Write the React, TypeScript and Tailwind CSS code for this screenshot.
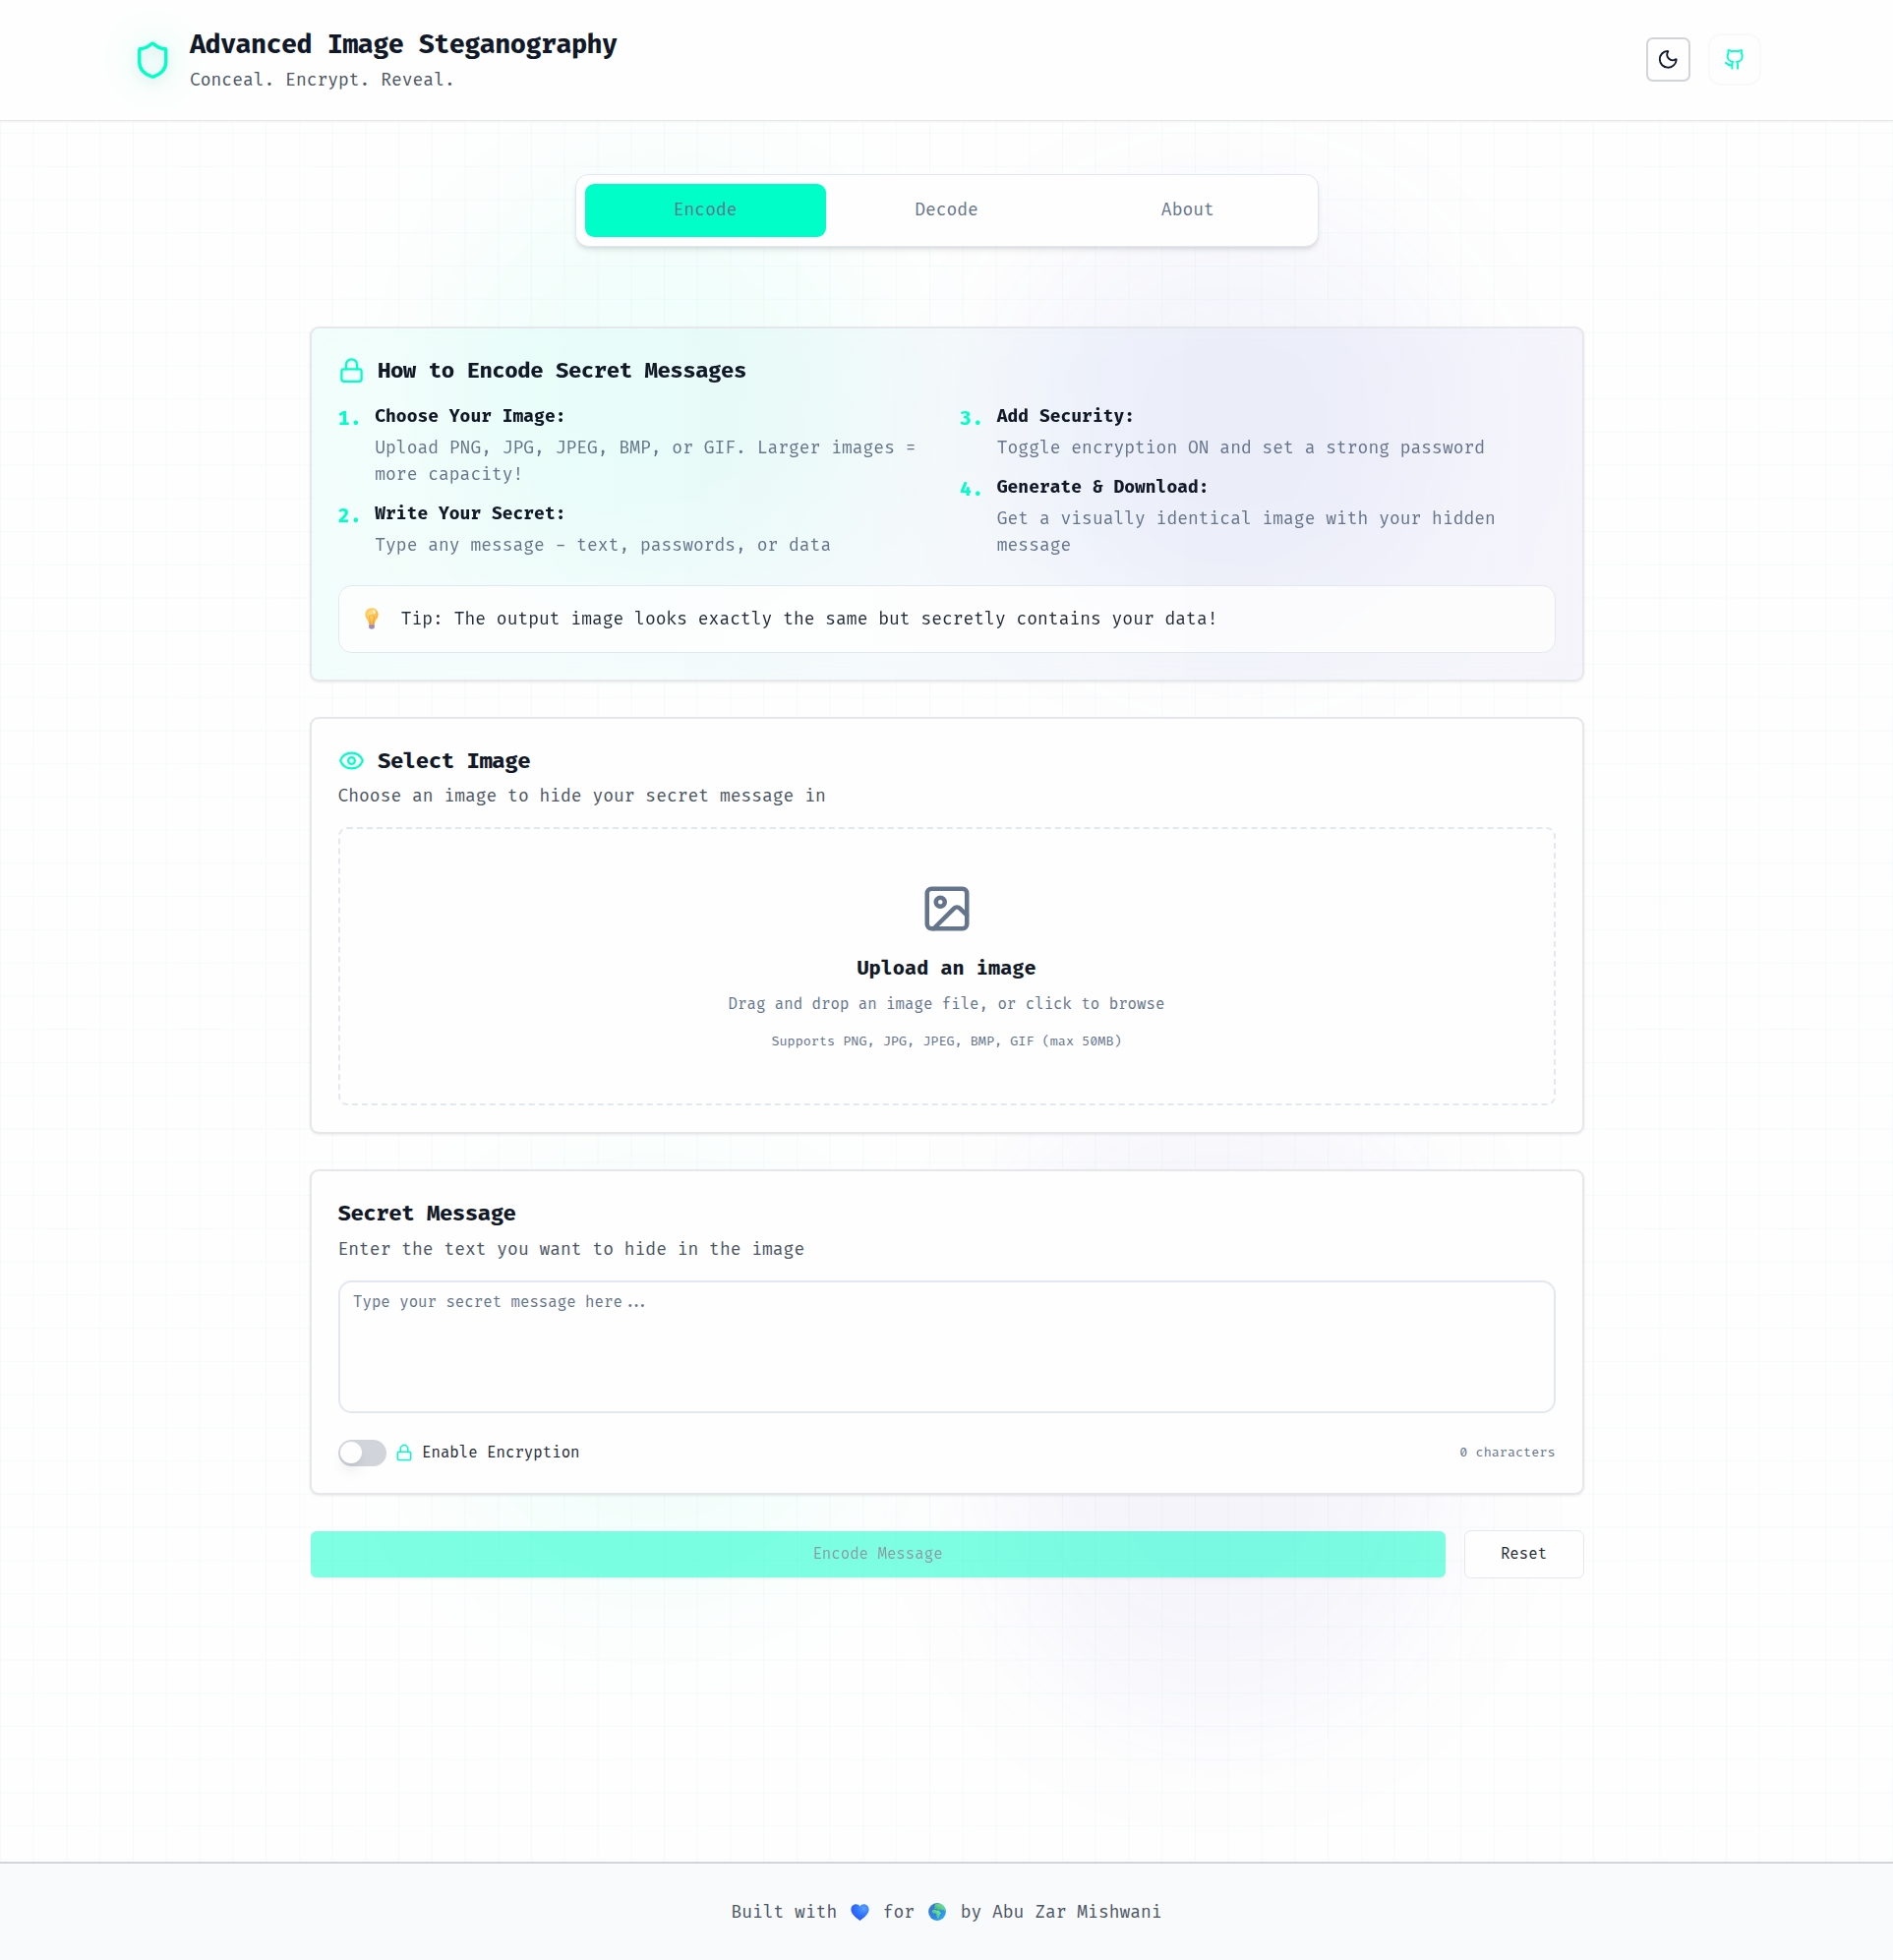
import React from "react";
import { Eye, Github, Image as ImageIcon, Lock, Moon, Shield } from "lucide-react";

const steps = [
  [
    { n: "1.", title: "Choose Your Image:", text: "Upload PNG, JPG, JPEG, BMP, or GIF. Larger images = more capacity!" },
    { n: "2.", title: "Write Your Secret:", text: "Type any message - text, passwords, or data" },
  ],
  [
    { n: "3.", title: "Add Security:", text: "Toggle encryption ON and set a strong password" },
    { n: "4.", title: "Generate & Download:", text: "Get a visually identical image with your hidden message" },
  ],
];

function Backdrop() {
  return (
    <div className="pointer-events-none absolute inset-0 -z-10 overflow-hidden bg-[#fefefe]">
      <div className="absolute left-[450px] top-[170px] h-[430px] w-[430px] rounded-full bg-[#00ffc8]/5 blur-[72px]" />
      <div className="absolute left-[450px] top-[1190px] h-[430px] w-[430px] rounded-full bg-[#00ffc8]/5 blur-[72px]" />
      <div className="absolute left-[1030px] top-[210px] h-[440px] w-[440px] rounded-full bg-[#5c60d8]/6 blur-[72px]" />
      <div className="absolute left-[1020px] top-[1110px] h-[640px] w-[440px] rounded-full bg-[#6a55d0]/6 blur-[72px]" />
      <div className="absolute inset-0 bg-[linear-gradient(rgba(0,150,130,0.03)_1px,transparent_1px),linear-gradient(90deg,rgba(0,150,130,0.03)_1px,transparent_1px)] bg-[size:33.75px_33.75px]" />
    </div>
  );
}

function BulbIcon() {
  return (
    <svg viewBox="0 0 14 22" className="h-[22px] w-[14px]">
      <defs>
        <radialGradient id="bulb" cx="0.4" cy="0.35" r="0.7">
          <stop offset="0" stopColor="#ffe08a" />
          <stop offset="0.6" stopColor="#ffc247" />
          <stop offset="1" stopColor="#f5a53c" />
        </radialGradient>
      </defs>
      <path d="M7 0.3C3.1 0.3 0.4 3.2 0.4 6.9c0 2.6 1.3 4.1 2.4 5.7.8 1.2 1 2.3 1.3 3.6.2.7.6 1 1.3 1h3.2c.7 0 1.1-.3 1.3-1 .3-1.3.5-2.4 1.3-3.6 1.1-1.6 2.4-3.1 2.4-5.7C13.6 3.2 10.900.3 7 .3Z" fill="url(#bulb)" />
      <path d="M5.600 16.500 4.600 8.600c.7-1.300 1.800-1 2.400-.2.6-.8 1.700-1.100 2.400.2l-1 7.900" fill="none" stroke="#f59a35" strokeWidth="0.8" />
      <ellipse cx="9.300" cy="4" rx="1.600" ry="2.200" fill="#fff6d8" opacity="0.8" transform="rotate(-28 9.300 4)" />
      <path d="M4.200 16.900h5.600v3.100c0 .6-.4 1-1 1L8.200 21.800H5.800L5.200 21c-.6 0-1-.4-1-1Z" fill="#b49cc0" />
      <path d="M4.200 18.500h5.600M4.400 20.200h5.200" stroke="#8a719c" strokeWidth="0.7" />
    </svg>
  );
}

function HeartIcon() {
  return (
    <svg viewBox="0 0 19 17" className="h-[17px] w-[19px]">
      <defs>
        <radialGradient id="heart" cx="0.72" cy="0.25" r="0.85">
          <stop offset="0" stopColor="#5aa2ff" />
          <stop offset="0.5" stopColor="#2f76fb" />
          <stop offset="1" stopColor="#2a4dff" />
        </radialGradient>
      </defs>
      <path d="M9.500 2.600C8.600 1.100 7.200.3 5.500.3 2.600.3.4 2.600.4 5.500c0 4.500 4.600 8 8.400 11 .4.3 1 .3 1.400 0 3.800-3 8.400-6.500 8.400-11 0-2.900-2.200-5.200-5.100-5.200-1.700 0-3.100.8-4 2.300Z" fill="url(#heart)" />
    </svg>
  );
}

function GlobeIcon() {
  return (
    <svg viewBox="0 0 18 18" className="size-[18px]">
      <defs>
        <linearGradient id="sea" x1="0" y1="0" x2="1" y2="1">
          <stop offset="0" stopColor="#3f74c9" />
          <stop offset="0.55" stopColor="#2c84ea" />
          <stop offset="1" stopColor="#35b8f5" />
        </linearGradient>
        <linearGradient id="land" x1="0" y1="1" x2="1" y2="0">
          <stop offset="0" stopColor="#45a86e" />
          <stop offset="1" stopColor="#74f5a0" />
        </linearGradient>
      </defs>
      <circle cx="9" cy="9" r="8.900" fill="url(#sea)" />
      <path d="M7 1.600 9.400.4c3.200.1 5.900 1.800 7.300 4.300l.9 3-1.400.6-1-1.500-1.700.6-1.600-.9-1.900.4L8.600 5.800l-2 .5-.9-.8 1.200-1.200-.6-1.100Z" fill="url(#land)" />
      <path d="M4.200 7.200 6.400 6.700l1.900.9 2.800.1 1.200 2 .9.3-1.600 2.300-.5 2.300-1.500 1.400-1.100-1.900-.1-2.400-.9-1.100-2.500-.1L3.600 9Z" fill="url(#land)" />
    </svg>
  );
}

function Header() {
  return (
    <header className="border-b border-[#e5e7eb] bg-[#fefefe]/95 shadow-[0_1px_2px_rgba(0,0,0,0.05)]">
      <div className="mx-auto flex h-[122px] w-full max-w-[1728px] items-center justify-between px-8">
        <div className="flex items-center gap-4">
          <Shield className="size-9 text-[#00ffc8] [filter:drop-shadow(0_0_20px_rgba(0,255,200,0.5))_drop-shadow(0_4px_6px_rgba(0,0,0,0.1))]" />
          <div>
            <h1 className="pt-[2px] text-2xl leading-[34px] font-bold tracking-[-0.675px] text-[#111827]">Advanced Image Steganography</h1>
            <p className="mt-1 text-[#4b5563]">Conceal. Encrypt. Reveal.</p>
          </div>
        </div>
        <div className="flex items-center gap-4 pb-px">
          <button className="flex size-[45px] items-center justify-center rounded-md border-2 border-[#d1d5db] bg-[#fefefe] text-[#0f172a]">
            <Moon className="size-5" />
          </button>
          <a className="flex size-[53.5px] items-center justify-center rounded-xl border-2 border-[#f8f9fa] text-[#00ffc8]">
            <Github className="size-5" />
          </a>
        </div>
      </div>
    </header>
  );
}

function Tabs() {
  return (
    <nav className="mx-auto grid w-[756px] grid-cols-3 rounded-xl border border-[#e2e8f0] bg-[#fefefe] p-2 text-[#64748b] shadow-[0_4px_6px_-1px_rgba(0,0,0,0.1),0_2px_4px_-2px_rgba(0,0,0,0.1)]">
      <button className="h-12 rounded-lg bg-[#00ffc8] pb-[2px]">Encode</button>
      <button className="h-12 rounded-lg pb-[2px]">Decode</button>
      <button className="h-12 rounded-lg pb-[2px]">About</button>
    </nav>
  );
}

function CardTitle({ icon, children }: { icon?: React.ReactNode; children: React.ReactNode }) {
  return (
    <h2 className="flex items-center gap-3 text-xl font-bold tracking-[-0.5625px] text-[#111827]">
      {icon}
      <span className="pt-[2px] leading-[29.5px]">{children}</span>
    </h2>
  );
}

const cardBase = "rounded-lg border-2 border-[#e5e7eb] p-6 shadow-[0_1px_3px_rgba(0,0,0,0.08)]";

function HowTo() {
  return (
    <section className={`${cardBase} bg-linear-to-r from-[#00ffc8]/5 to-[#6a55d0]/6 backdrop-blur-sm`}>
      <CardTitle icon={<Lock className="size-6 text-[#00ffc8]" />}>How to Encode Secret Messages</CardTitle>
      <div className="mt-4 grid grid-cols-2 gap-6">
        {steps.map((column, i) => (
          <div key={i} className="flex flex-col gap-3">
            {column.map((step) => (
              <div key={step.n} className="flex items-start gap-3">
                <span className="text-lg leading-[31.5px] font-bold text-[#00ffc8]">{step.n}</span>
                <div>
                  <strong className="block pb-[2px] leading-[25px] font-bold text-[#111827]">{step.title}</strong>
                  <p className="mt-1 text-[#64748b]">{step.text}</p>
                </div>
              </div>
            ))}
          </div>
        ))}
      </div>
      <div className="mt-6 flex h-[69px] items-center gap-4 rounded-xl border border-[#e2e8f0] bg-[#fefefe]/80 px-[20.25px] text-[#1f2937]">
        <span className="flex w-[25px] shrink-0 justify-center pb-[2px] pl-px">
          <BulbIcon />
        </span>
        <span>Tip: The output image looks exactly the same but secretly contains your data!</span>
      </div>
    </section>
  );
}

function SelectImage() {
  return (
    <section className={`${cardBase} bg-[#fefefe]`}>
      <CardTitle icon={<Eye className="size-6 text-[#00ffc8]" />}>Select Image</CardTitle>
      <p className="mt-1.5 text-[#4b5563]">Choose an image to hide your secret message in</p>
      <div className="mt-4 flex flex-col items-center rounded-lg border-2 border-dashed border-[#e2e8f0] p-12">
        <ImageIcon className="size-12 text-[#64748b]" />
        <h3 className="mt-4 pt-[2px] text-lg leading-[29.5px] font-bold text-[#111827]">Upload an image</h3>
        <p className="mt-2 pt-[2px] text-sm leading-[20.5px] text-[#64748b]">Drag and drop an image file, or click to browse</p>
        <p className="mt-4 text-xs leading-[18px] text-[#64748b]">Supports PNG, JPG, JPEG, BMP, GIF (max 50MB)</p>
      </div>
    </section>
  );
}

function SecretMessage() {
  return (
    <section className={`${cardBase} bg-[#fefefe]`}>
      <CardTitle>Secret Message</CardTitle>
      <p className="mt-1.5 text-[#4b5563]">Enter the text you want to hide in the image</p>
      <textarea
        className="mt-4 block h-[135px] w-full resize-none rounded-xl border-2 border-[#e2e8f0] bg-[#fefefe] px-3 pt-[10px] text-sm leading-[22.5px] placeholder:text-[#64748b]"
        placeholder="Type your secret message here..."
      />
      <div className="mt-6 flex h-6 items-center justify-between">
        <div className="flex items-center gap-2">
          <span className="flex h-6 w-11 items-center rounded-full bg-[#d1d5db] px-[2px]">
            <span className="size-5 rounded-full bg-[#fefefe] shadow-[0_10px_15px_-3px_rgba(0,0,0,0.1),0_4px_6px_-4px_rgba(0,0,0,0.1)]" />
          </span>
          <Lock className="size-4 text-[#00ffc8]" />
          <span className="pt-[2px] text-sm leading-[22.5px] text-[#1f2937]">Enable Encryption</span>
        </div>
        <span className="text-xs leading-[18px] text-[#64748b]">0 characters</span>
      </div>
    </section>
  );
}

export default function App() {
  return (
    <div className="relative isolate flex min-h-[1993px] flex-col font-['Fira_Code','DejaVu_Sans_Mono',monospace] text-[17.55px] leading-[27px] [--radius-lg:9px] [--radius-md:6.75px] [--radius-xl:13.5px] [--spacing:4.5px] [--text-2xl:26.325px] [--text-lg:19.744px] [--text-sm:15.356px] [--text-xl:21.9375px] [--text-xs:13.1625px]">
      <Backdrop />
      <Header />
      <main className="flex-1 pt-12">
        <Tabs />
        <div className="mx-auto mt-[81px] flex w-[1296px] flex-col gap-8">
          <HowTo />
          <SelectImage />
          <SecretMessage />
          <div className="flex gap-4 text-sm">
            <button className="h-[49px] flex-1 rounded-md border border-transparent bg-[#00ffc8] bg-clip-padding pt-[2px] text-[#1c3640] opacity-50 shadow-[0_1px_2px_rgba(0,0,0,0.08)]">
              Encode Message
            </button>
            <button className="h-[49px] w-[122px] rounded-md border border-[#e2e8f0] bg-[#fefefe] pt-[2px] text-[#1f2937]">Reset</button>
          </div>
        </div>
      </main>
      <footer className="flex h-[100px] items-center justify-center border-t-2 border-[#d1d5db] bg-[#f9fafb]/95 text-[#4b5563]">
        <p className="flex items-center pt-px whitespace-pre">
          <span>Built with</span>
          <span className="flex w-[46.5px] justify-center">
            <HeartIcon />
          </span>
          <span>for</span>
          <span className="flex w-[46.5px] justify-center pb-px">
            <GlobeIcon />
          </span>
          <span>by Abu Zar Mishwani</span>
        </p>
      </footer>
    </div>
  );
}
